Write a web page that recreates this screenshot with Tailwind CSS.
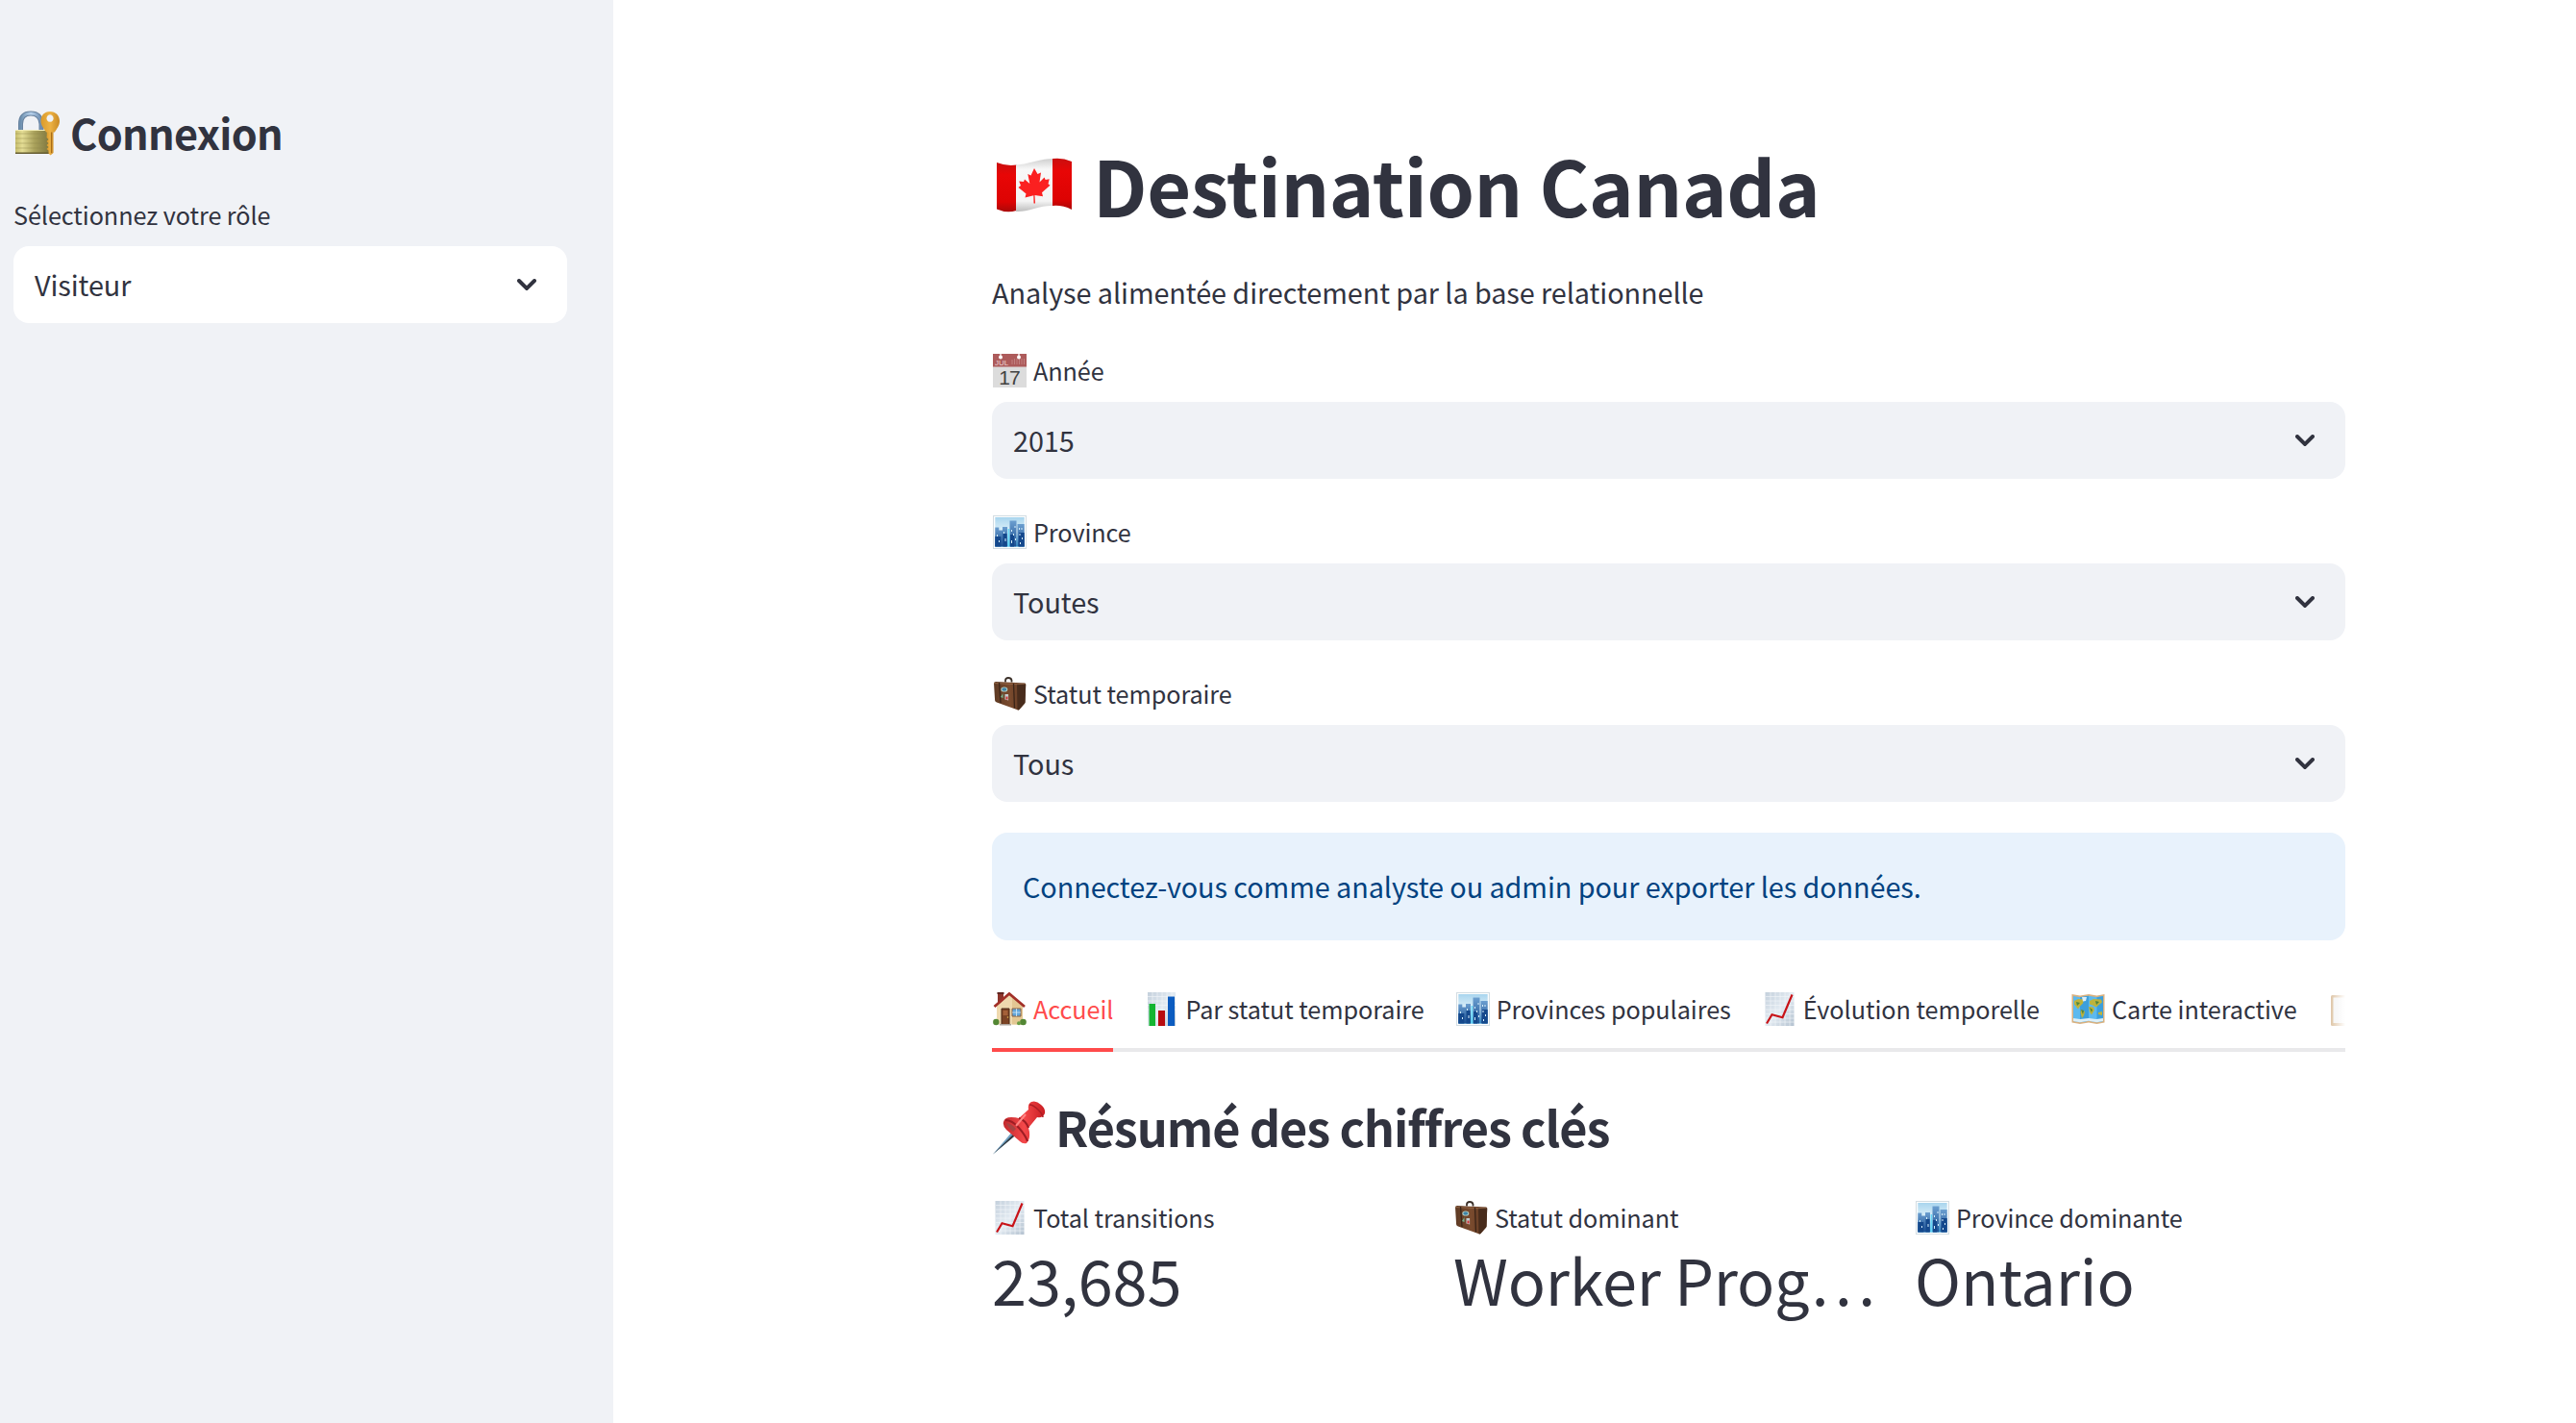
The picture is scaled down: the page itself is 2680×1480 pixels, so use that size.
<!DOCTYPE html>
<html lang="fr">
<head>
<meta charset="utf-8">
<title>Destination Canada</title>
<script src="https://cdn.jsdelivr.net/npm/@tailwindcss/browser@4"></script>
</head>
<body class="bg-white text-[#31333f] font-['Noto_Sans_CJK_SC','Noto_Sans_CJK_JP',sans-serif] overflow-hidden">
<svg width="0" height="0" class="absolute">
  <defs>
    <linearGradient id="brass" x1="0" x2="1"><stop offset="0" stop-color="#c6bd6c"/><stop offset=".2" stop-color="#e4dd95"/><stop offset=".55" stop-color="#aaa25c"/><stop offset="1" stop-color="#7c743d"/></linearGradient>
    <linearGradient id="gold" x1="0" x2="1"><stop offset="0" stop-color="#d99a2b"/><stop offset=".5" stop-color="#edb244"/><stop offset="1" stop-color="#c98a24"/></linearGradient>
    <linearGradient id="sky" x1="0" y1="0" x2="0" y2="1"><stop offset="0" stop-color="#a9d5ee"/><stop offset=".5" stop-color="#e0f2fa"/><stop offset="1" stop-color="#3fb4ea"/></linearGradient>
    <linearGradient id="tower" x1="0" y1="0" x2="0" y2="1"><stop offset="0" stop-color="#6c9fd0"/><stop offset="1" stop-color="#1a4f92"/></linearGradient>
    <linearGradient id="paper" x1="0" y1="0" x2="1" y2="1"><stop offset="0" stop-color="#c4d0dc"/><stop offset=".5" stop-color="#e3ebf2"/><stop offset="1" stop-color="#b4c2d0"/></linearGradient>
    <linearGradient id="leather" x1="0" x2="1"><stop offset="0" stop-color="#5d3a24"/><stop offset=".5" stop-color="#7a4b2e"/><stop offset="1" stop-color="#5a3520"/></linearGradient>
    <linearGradient id="flagred" x1="0" y1="0" x2="0" y2="1"><stop offset="0" stop-color="#c90f0f"/><stop offset=".25" stop-color="#e80606"/><stop offset=".8" stop-color="#dd0303"/><stop offset="1" stop-color="#aa0808"/></linearGradient>
    <linearGradient id="flagwhite" x1="0" y1="0" x2="0" y2="1"><stop offset="0" stop-color="#cfcfcf"/><stop offset=".2" stop-color="#f8f8f8"/><stop offset=".8" stop-color="#f4f4f4"/><stop offset="1" stop-color="#bdbdbd"/></linearGradient>
    <linearGradient id="pinred" x1="0" x2="1"><stop offset="0" stop-color="#c32a2d"/><stop offset=".5" stop-color="#f4484a"/><stop offset="1" stop-color="#c91d22"/></linearGradient>
    <linearGradient id="steel" x1="0" x2="1"><stop offset="0" stop-color="#6d8fae"/><stop offset=".5" stop-color="#b8d2ec"/><stop offset="1" stop-color="#6c8cb0"/></linearGradient>
  </defs>
  <symbol id="i-city" viewBox="0 0 35 35">
    <rect x=".5" y=".5" width="34" height="34" fill="#fdfefe" stroke="#d3dde3"/>
    <rect x="2.3" y="2" width="30.4" height="30.5" fill="url(#sky)"/>
    <path d="M2.300 32.500V12.500h4v3h3.700v-3.500h5v20.500z" fill="url(#tower)"/>
    <path d="M17.500 32.500V5.500h7v27z" fill="url(#tower)"/><path d="M25.500 32.500V9h7.200v23.500z" fill="url(#tower)"/>
    <path d="M2.300 22h6v10.500h-6zM10.500 19h4v13.500h-4zM18 20h4v12.500h-4zM27 18h5.700v14.500H27z" fill="#14488c"/>
    <path d="M15.600 14h1.600v18.500h-1.600z" fill="#66d6f6"/>
    <path d="M4 20h1v2H4zM6 26h1v2H6zM11 17h1v2h-1zM12.500 24h1v3h-1zM19 15h1v2h-1zM21 19h1v2h-1zM19 26h1v3h-1zM22.500 11h1v2h-1zM23 24h1v2h-1zM27 13h1v2h-1zM29.500 13h1v2h-1zM27.500 19h1v2h-1zM30 23h1v2h-1zM28 28h1v2h-1z" fill="#d5eefb"/>
  </symbol>
  <symbol id="i-case" viewBox="0 0 35 35">
    <path d="M13 5.500V3.500q0-2.500 3-2.500t3.500 2.500V5.500" fill="none" stroke="#3b3029" stroke-width="1.800"/>
    <path d="M1 6.500Q1 5 3 5l21 1 9 .5q1.200 0 1.200 1.500L33.500 26q0 1.500-1 2.300L27.500 34q-.8.800-2 .3L4 26.500q-1.700-.6-1.900-2z" fill="url(#leather)"/>
    <path d="M25 7l9.200.5L33.500 27l-6.700 7.500L25.500 34z" fill="#482c1c"/><path d="M1 6.500l24 1.200 8.500-.6" stroke="#9a6d4c" stroke-width=".8" fill="none"/>
    <path d="M6.500 6l1.500 21M21.500 7l1 25.500" stroke="#3a2418" stroke-width="1.300"/>
    <ellipse cx="11.800" cy="13" rx="3.500" ry="2.600" fill="#b4cfc4"/><ellipse cx="11.800" cy="13" rx="2.500" ry="1.700" fill="#3d83a8"/>
    <path d="M8 21l2.500-4v5z" fill="#76b490"/><path d="M12.500 18h3.600v6.500l-3.600-1z" fill="#c4ccd0"/><path d="M13.500 20.500h2v3h-2z" fill="#cf3030"/>
  </symbol>
  <symbol id="i-house" viewBox="0 0 35 35">
    <path d="M5 1h6v12H5z" fill="#8c342b"/><path d="M4.500 0h7v2h-7z" fill="#5d241f"/>
    <path d="M4 14L17.500 2 31 14v19.500H4z" fill="#efd9ae"/><path d="M20 5l11 9v19.500H20z" fill="#e3c793"/>
    <path d="M1.500 15L17 1.500 33 15" fill="none" stroke="#a23028" stroke-width="2.800"/>
    <path d="M9 17h8v16.500H9z" fill="#7b4325" stroke="#4d2a18"/><path d="M10.500 19h5v5h-5z" fill="#a46038"/><circle cx="15.500" cy="26" r=".8" fill="#e3bb50"/>
    <path d="M20 17h9v8h-9z" fill="#61a5da" stroke="#8b6041"/><path d="M24.500 17v8M20 21h9" stroke="#d7edfa" stroke-width=".8"/>
    <path d="M7 33h12v1.500H7z" fill="#aaa49e"/><circle cx="3.300" cy="31" r="3.200" fill="#538734"/><circle cx="31.500" cy="31" r="3.300" fill="#538734"/><circle cx="27" cy="32.300" r="2" fill="#699e45"/>
  </symbol>
  <symbol id="i-bars" viewBox="0 0 35 35">
    <rect x="3" width="29" height="35" fill="url(#paper)"/>
    <path d="M3 4.500h29M3 9h29M3 13.500h29M3 18h29M8 0v35M13 0v35M18 0v35M23 0v35M28 0v35" stroke="#f3f7fa" stroke-width=".6"/>
    <path d="M4.500 12H11v23H4.500z" fill="#14b532"/><path d="M14 19h7v16h-7z" fill="#b80c10"/><path d="M24 4.500h7V35h-7z" fill="#0c5cc0"/>
  </symbol>
  <symbol id="i-line" viewBox="0 0 35 35">
    <rect x="2.500" width="30" height="35" fill="url(#paper)"/>
    <path d="M3 4.500h30M3 9h30M3 13.500h30M3 18h30M3 22.500h30M3 27h30M3 31h30M8 0v35M13 0v35M18 0v35M23 0v35M28 0v35" stroke="#f3f7fa" stroke-width=".6"/>
    <path d="M4 32.500L9.500 23.300l11 3L30.500 2.500" fill="none" stroke="#c81318" stroke-width="2.200"/>
  </symbol>
  <symbol id="i-map" viewBox="0 0 35 35">
    <path d="M.5 2l8.500 1.500L18 2l8.500 1.500L34.500 2v29.500L26.500 33 18 31.500 9 33 .5 31.500z" fill="#d9b180"/>
    <path d="M2 4l7 1.300L18 3.800l8.500 1.500L33 4v26l-6.500 1.200L18 29.700l-9 1.500L2 30z" fill="#5cb9ee"/>
    <path d="M9 5.300l9-1.500v25.900l-9 1.500zM26.500 5.300L33 4v26l-6.500 1.200z" fill="#3c9fdc"/>
    <path d="M3 9l4-2 6 .5-1 4-3 3-2 3-4-5zM10 18l4 2-1 4-2 3-1.500-6zM19 9l4-2 8 .5 1 3-4 3-2 2-4-2-3-1zM18 15l5 .5 1 3-3 5-2-3zM28 21l4-1v4l-4-1z" fill="#bdb33b"/>
    <path d="M11 5h5l-1 4-3 .5zM2 27l7 1 9-1 8 1 7-1v3l-6.500 1.200L18 29.700l-9 1.500L2 30z" fill="#dceff8"/><path d="M5 10l4 1-3 3zM10 18l3 1-1 4zM19 16l3 2-1 3zM25 9l4 1-3 3z" fill="#4c8540"/>
  </symbol>
  <symbol id="i-clip" viewBox="0 0 35 35">
    <rect x="3" y="3" width="28" height="32" rx="1.500" fill="#d9bc98"/><rect x="5.500" y="5.500" width="23" height="26.500" fill="#f1f1f1"/>
  </symbol>
  <symbol id="i-chev" viewBox="0 0 20 12"><path d="M2 2l8 8 8-8" fill="none" stroke="#31333f" stroke-width="3.900" stroke-linecap="round" stroke-linejoin="miter"/></symbol>
</svg>

<div class="flex h-[1480px] w-[2680px]">
  <aside class="w-[638px] shrink-0 bg-[#f0f2f6] pl-[14px] pt-[104px]">
    <h2 class="flex h-[66px] items-center text-[43.200px] leading-[66px] font-bold tracking-[-0.700px]">
      <svg class="mt-[2px] mr-[10px] ml-[1px] h-[47px] w-[48px] shrink-0" viewBox="0 0 48 47">
        <path d="M6.500 22V14Q6.500 3 17 3T28 14v8" fill="none" stroke="#66809d" stroke-width="5"/>
        <path d="M6.500 22V14Q6.500 3 17 3T28 14v8" fill="none" stroke="url(#steel)" stroke-width="3.200"/>
        <rect x="1" y="20" width="36" height="25" rx="1" fill="url(#brass)"/>
        <path d="M1 24h33M1 29h33M1 34h33M1 39h33" stroke="#8f874b" stroke-width=".7" opacity=".6"/><path d="M1 43.500h36V45H1z" fill="#655c31"/><path d="M1 20.500h33" stroke="#f1ecb5"/>
        <path d="M34 20h6.500v24l-3 2.500-2-2v-3l-2-1.500 2-2-2-2 2-2-2-2 2-2-2-2z" fill="url(#gold)"/><path d="M38.500 22v22" stroke="#a86d18" stroke-width="1"/>
        <path d="M37 1c6 0 10 4.300 10 10 0 5-3.500 8.500-5 11.500h-9C31.500 19.500 27.500 16 27.500 11 27.500 5.300 31 1 37 1zm0 3.200a3.600 3.800 0 1 0 .1 0z" fill="url(#gold)" fill-rule="evenodd"/>
      </svg>
      <span>Connexion</span>
    </h2>
    <div class="mt-8 h-[42px] text-[25.200px] leading-[42px] tracking-[-0.060px]">Sélectionnez votre rôle</div>
    <div class="mt-[12px] flex h-20 w-[576px] items-center justify-between rounded-2xl bg-white pr-[32px] pl-[22px] text-[28.800px] leading-[80px] tracking-[-0.070px]">
      <span>Visiteur</span><svg class="h-3 w-5"><use href="#i-chev"/></svg>
    </div>
  </aside>

  <main class="ml-[394px] w-[1408px] pt-[142px] tracking-[-0.070px]">
    <h1 class="flex h-[100px] items-center text-[79.200px] leading-[100px] font-bold tracking-[-0.380px]">
      <svg class="mr-[22px] ml-[5px] h-[58px] w-[78px] shrink-0" viewBox="0 0 78 58">
        <path d="M0 6Q10 10 20.500 8.500V56Q10 59 0 54.500z" fill="url(#flagred)"/>
        <path d="M20 8.500Q28 8 39 5T58.500 2V51Q50 50.500 39 54T20 57z" fill="url(#flagwhite)"/>
        <path d="M58 2Q68 .5 78 5V55Q68 50 58 51z" fill="url(#flagred)"/>
        <path d="M39 12l3.500 6 3.500-1.500-1.500 10 5-5 1.200 2.500 4-.8-1.200 5 2 1.600-8.500 7.400 1 4-8.500-1.200.5 8.500h-1.500l-.2-8.300-8.800 2.300 1-4-8-6.500 2.500-2-1.800-4.500 4.800.4 1-2.500 5.300 4.500-2-10 3.200 1.500z" fill="#fb2020"/>
      </svg>
      <span>Destination Canada</span>
    </h1>
    <p class="mt-[38px] h-12 text-[28.800px] leading-[48px]">Analyse alimentée directement par la base relationnelle</p>

    <section class="mt-[36px] flex flex-col gap-[34px]">
      <div>
        <div class="flex h-[42px] items-center text-[25.200px] leading-[42px]">
          <svg class="mr-[7px] ml-[1px] size-[35px]" viewBox="0 0 35 35">
            <rect width="35" height="35" fill="#dcdcdc"/><rect width="35" height="13.500" fill="#ad5b5b"/>
            <path d="M20 6v5M22.500 5v6M25 5v6M27.500 5v6M30 5v6M32.500 5v6" stroke="#c07f7f" stroke-width="1"/>
            <path d="M8 0v3M27 0v3" stroke="#fff" stroke-width="1.200"/><circle cx="8" cy="3.500" r="2" fill="#fff"/><circle cx="27" cy="3.500" r="2" fill="#fff"/>
            <text x="2" y="11.800" font-size="8" fill="#ecd3d3" font-family="Liberation Sans">JUL</text>
            <text x="17" y="32" font-size="21" fill="#424242" text-anchor="middle" letter-spacing="-1" font-family="Liberation Sans">17</text>
          </svg>Année</div>
        <div class="mt-3 flex h-20 items-center justify-between rounded-2xl bg-[#f0f2f6] pr-8 pl-[22px] text-[28.800px] leading-[80px]"><span>2015</span><svg class="h-3 w-5"><use href="#i-chev"/></svg></div>
      </div>
      <div>
        <div class="flex h-[42px] items-center text-[25.200px] leading-[42px]"><svg class="mr-[7px] ml-[1px] size-[35px]"><use href="#i-city"/></svg>Province</div>
        <div class="mt-3 flex h-20 items-center justify-between rounded-2xl bg-[#f0f2f6] pr-8 pl-[22px] text-[28.800px] leading-[80px]"><span>Toutes</span><svg class="h-3 w-5"><use href="#i-chev"/></svg></div>
      </div>
      <div>
        <div class="flex h-[42px] items-center text-[25.200px] leading-[42px]"><svg class="mr-[7px] ml-[1px] size-[35px]"><use href="#i-case"/></svg>Statut temporaire</div>
        <div class="mt-3 flex h-20 items-center justify-between rounded-2xl bg-[#f0f2f6] pr-8 pl-[22px] text-[28.800px] leading-[80px]"><span>Tous</span><svg class="h-3 w-5"><use href="#i-chev"/></svg></div>
      </div>
    </section>

    <div class="mt-8 h-28 rounded-2xl bg-[#e8f2fc] px-8 text-[28.800px] leading-[112px] text-[#004280]">Connectez-vous comme analyste ou admin pour exporter les données.</div>

    <nav class="relative mt-[30px] overflow-hidden border-b-4 border-[#e9e9eb] text-[25.200px] leading-[42px] tracking-[-0.040px] whitespace-nowrap">
      <div class="flex h-[82px] items-center gap-8">
        <div class="flex shrink-0 items-center text-[#ff4b4b]"><svg class="mr-[7px] ml-[1px] size-[35px]"><use href="#i-house"/></svg>Accueil</div>
        <div class="flex shrink-0 items-center"><svg class="mr-[7px] ml-[1px] size-[35px]"><use href="#i-bars"/></svg>Par statut temporaire</div>
        <div class="flex shrink-0 items-center"><svg class="mr-[7px] ml-[1px] size-[35px]"><use href="#i-city"/></svg>Provinces populaires</div>
        <div class="flex shrink-0 items-center"><svg class="mr-[7px] ml-[1px] size-[35px]"><use href="#i-line"/></svg>Évolution temporelle</div>
        <div class="flex shrink-0 items-center"><svg class="mr-[7px] ml-[1px] size-[35px]"><use href="#i-map"/></svg>Carte interactive</div>
        <div class="shrink-0"><svg class="size-[35px]"><use href="#i-clip"/></svg></div>
      </div>
      <div class="absolute top-0 right-0 h-[82px] w-4 bg-linear-to-r from-white/10 to-white"></div>
    </nav>
    <div class="relative -mt-1 h-1 w-[126px] bg-[#ff4b4b]"></div>

    <h2 class="mt-[44px] flex h-[68px] items-center text-[50.400px] leading-[68px] font-bold tracking-[-1.100px]">
      <svg class="mt-[2px] mr-[10px] ml-[1px] h-[56px] w-[55px] shrink-0" viewBox="0 0 55 56">
        <path d="M0 55.500L21 31l4 3.500z" fill="#6f9fc0"/><path d="M0 55.500L23 33l2 1.500z" fill="#31373d"/>
        <path d="M11 22q1-5 8-5 5 0 8 1L37 9q-1-6 3-8 5-2 10 3 5 4 4 9-2 5-8 4l-9 11q3 10-2 16-4 1-7-2L14 30q-4-4-3-8z" fill="url(#pinred)"/>
        <path d="M13 20q7 0 14 8t9 14M27 18q7 2 10 10" fill="none" stroke="#9f1d24" stroke-width="2"/>
        <path d="M38 4q4 0 9 5t5 8" fill="none" stroke="#ad1d24" stroke-width="1.600"/><path d="M34 14l-10 12" stroke="#ff8583" stroke-width="2"/>
        <path d="M14 23q1 4 7 9l3-3q-4-5-10-6z" fill="#a64443"/>
      </svg>
      <span>Résumé des chiffres clés</span>
    </h2>

    <section class="mt-[39px] grid grid-cols-3 gap-8">
      <div>
        <div class="flex h-[42px] items-center text-[25.200px] leading-[42px]"><svg class="mr-[7px] ml-[1px] size-[35px]"><use href="#i-line"/></svg>Total transitions</div>
        <div class="-mt-[5px] h-24 text-[64.800px] leading-[96px]">23,685</div>
      </div>
      <div>
        <div class="flex h-[42px] items-center text-[25.200px] leading-[42px]"><svg class="mr-[7px] ml-[1px] size-[35px]"><use href="#i-case"/></svg>Statut dominant</div>
        <div class="-mt-[5px] h-24 text-[64.800px] leading-[96px] tracking-[-0.200px] whitespace-nowrap">Worker Prog…</div>
      </div>
      <div>
        <div class="flex h-[42px] items-center text-[25.200px] leading-[42px]"><svg class="mr-[7px] ml-[1px] size-[35px]"><use href="#i-city"/></svg>Province dominante</div>
        <div class="-mt-[5px] h-24 text-[64.800px] leading-[96px]">Ontario</div>
      </div>
    </section>
  </main>
</div>
</body>
</html>
